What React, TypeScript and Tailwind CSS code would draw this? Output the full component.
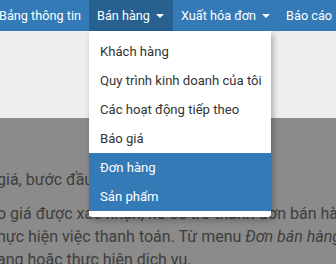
import React from "react";

function Caret() {
  return (
    <span className="ml-[6px] inline-block h-0 w-0 border-x-[4px] border-t-[4px] border-x-transparent border-t-white align-middle" />
  );
}

export default function App() {
  const items = [
    "Khách hàng",
    "Quy trình kinh doanh của tôi",
    "Các hoạt động tiếp theo",
    "Báo giá",
  ];
  const active = ["Đơn hàng", "Sản phẩm"];
  return (
    <div
      className="relative h-[264px] w-[336px] overflow-hidden bg-[#8b8b8b]"
      style={{ fontFamily: "Roboto, 'Noto Sans', sans-serif" }}
    >
      <div className="flex h-[31px] bg-[#337ab7] text-[12.7px] text-white whitespace-nowrap">
        <div className="-ml-[9px] flex items-center px-2">Bảng thông tin</div>
        <div className="flex items-center bg-[#286090] px-2 pr-[9px]">
          Bán hàng
          <Caret />
        </div>
        <div className="flex items-center px-2">
          Xuất hóa đơn
          <Caret />
        </div>
        <div className="flex items-center px-2">Báo cáo</div>
      </div>
      <div className="h-[87px] bg-[#efeded]" />
      <div className="-ml-[3px] whitespace-nowrap text-[16px] text-[#3e3e3e]">
        <p className="mt-[51px] leading-[22px]">giá, bước đầu tiên</p>
        <div className="mt-[11px] leading-[23px]">
          <p>o giá được xác nhận, nó sẽ trở thành đơn bán hàng</p>
          <p>
            hực hiện việc thanh toán. Từ menu <em>Đơn bán hàng</em>
          </p>
          <p>ang hoặc thực hiện dịch vụ.</p>
        </div>
      </div>
      <div className="absolute left-[89px] top-[31px] w-[182px] rounded-b-[3px] bg-white py-[6px] text-[13.1px] text-[#333] shadow-[2px_3px_6px_rgba(0,0,0,0.3)]">
        {items.map((t) => (
          <div key={t} className="flex h-[29px] items-center pl-[11px] whitespace-nowrap">
            {t}
          </div>
        ))}
        {active.map((t) => (
          <div
            key={t}
            className="flex h-[29px] items-center bg-[#337ab7] pl-[11px] text-white whitespace-nowrap"
          >
            {t}
          </div>
        ))}
      </div>
    </div>
  );
}
